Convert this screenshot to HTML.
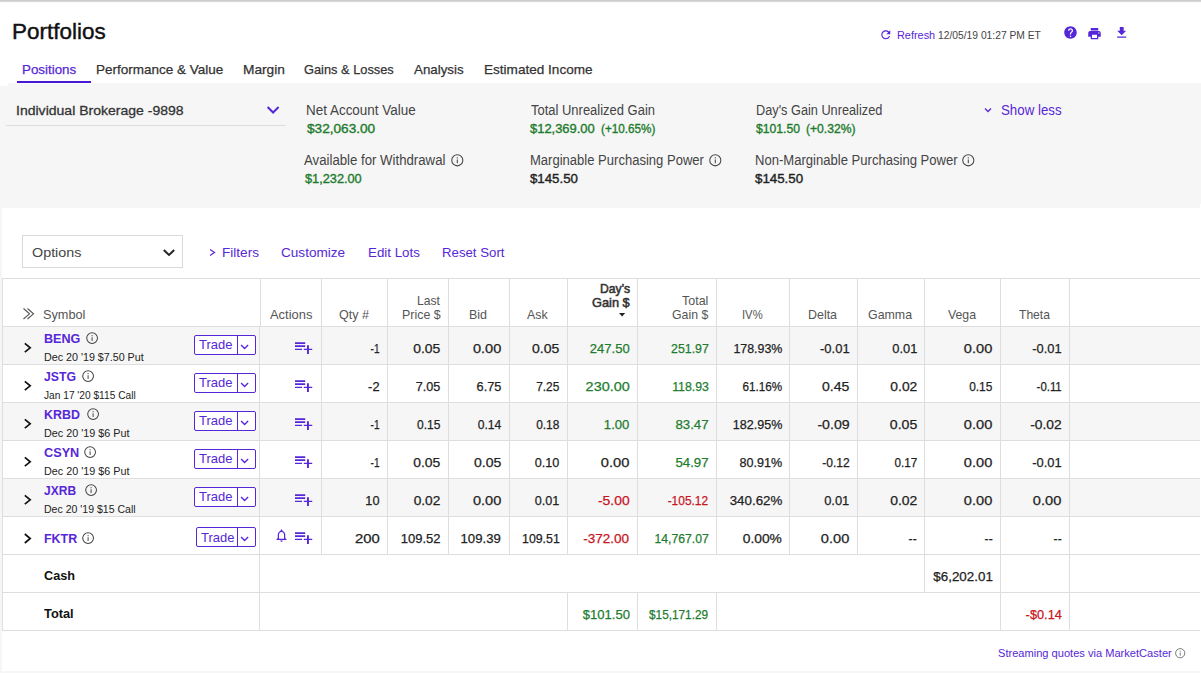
<!DOCTYPE html>
<html lang="en"><head><meta charset="utf-8"><title>Portfolios</title><style>
*{box-sizing:border-box;margin:0;padding:0}
html,body{width:1201px;height:673px;overflow:hidden;background:#f6f6f6;font-family:"Liberation Sans",sans-serif;color:#222}
.a{position:absolute}
.t{position:absolute;white-space:nowrap;line-height:1;transform-origin:0 0}
.tr{transform-origin:100% 0}
.ln{position:absolute;background:#dedede}
svg{position:absolute;overflow:visible}
</style></head><body>
<div class="bg">
<div class="a" style="left:0px;top:0px;width:1201px;height:1px;background:#cccccc;"></div>
<div class="a" style="left:0px;top:1px;width:1201px;height:1px;background:#d9d9d9;"></div>
<div class="a" style="left:0px;top:2px;width:1201px;height:1px;background:#fafafa;"></div>
<div class="a" style="left:0px;top:3px;width:1201px;height:80px;background:#fff;"></div>
<div class="a" style="left:0px;top:83px;width:8px;height:3px;background:#fff;"></div>
<div class="a" style="left:17px;top:83px;width:74px;height:1px;background:#fdfdfd;"></div>
<div class="a" style="left:2px;top:208px;width:1199px;height:463px;background:#fff;"></div>
<div class="a" style="left:1200px;top:204px;width:1px;height:469px;background:#fff;"></div>
</div>
<header>
<div class="t" style="top:22px;font-size:21.5px;color:#111;-webkit-text-stroke:0.4px #111;left:11.66px;transform:scaleX(1.0452);">Portfolios</div>
<div class="t" style="top:63px;font-size:13.5px;color:#5627d8;-webkit-text-stroke:0.25px #5627d8;left:21.66px;transform:scaleX(0.9889);">Positions</div>
<div class="t" style="top:63px;font-size:13.5px;color:#333;-webkit-text-stroke:0.25px #333;left:95.91px;">Performance &amp; Value</div>
<div class="t" style="top:63px;font-size:13.5px;color:#333;-webkit-text-stroke:0.25px #333;left:242.66px;transform:scaleX(1.0160);">Margin</div>
<div class="t" style="top:63px;font-size:13.5px;color:#333;-webkit-text-stroke:0.25px #333;left:304.46px;transform:scaleX(0.9495);">Gains &amp; Losses</div>
<div class="t" style="top:63px;font-size:13.5px;color:#333;-webkit-text-stroke:0.25px #333;left:413.96px;transform:scaleX(0.9879);">Analysis</div>
<div class="t" style="top:63px;font-size:13.5px;color:#333;-webkit-text-stroke:0.25px #333;left:483.66px;transform:scaleX(1.0049);">Estimated Income</div>
<div class="a" style="left:17px;top:81px;width:74px;height:2px;background:#4a18d3;"></div>
<div class="tools">
<svg style="left:878.75px;top:27.75px" width="13.50" height="13.50" viewBox="0 0 24 24"><path fill="#5627d8" d="M17.65 6.35C16.2 4.9 14.21 4 12 4c-4.42 0-7.99 3.58-7.99 8s3.57 8 7.99 8c3.73 0 6.84-2.55 7.73-6h-2.08c-.82 2.33-3.04 4-5.65 4-3.31 0-6-2.69-6-6s2.69-6 6-6c1.66 0 3.14.69 4.22 1.78L13 11h7V4l-2.35 2.35z"/></svg>
<div class="t" style="top:30px;font-size:11.5px;color:#5627d8;left:897.11px;transform:scaleX(0.9477);">Refresh</div>
<div class="t" style="top:30px;font-size:11.5px;color:#444;left:938.31px;transform:scaleX(0.8940);">12/05/19 01:27 PM ET</div>
<svg style="left:1062.75px;top:25.00px" width="15.00" height="15.00" viewBox="0 0 24 24"><path fill="#5627d8" d="M12 2C6.48 2 2 6.48 2 12s4.48 10 10 10 10-4.48 10-10S17.52 2 12 2zm1 17h-2v-2h2v2zm2.07-7.75l-.9.92C13.45 12.9 13 13.5 13 15h-2v-.5c0-1.1.45-2.1 1.17-2.830l1.24-1.26c.37-.36.59-.86.59-1.41 0-1.1-.9-2-2-2s-2 .9-2 2H8c0-2.21 1.79-4 4-4s4 1.79 4 4c0 .88-.36 1.68-.93 2.25z"/></svg>
<svg style="left:1086.85px;top:25.95px" width="15.00" height="15.00" viewBox="0 0 24 24"><path fill="#5627d8" d="M19 8H5c-1.66 0-3 1.34-3 3v6h4v4h12v-4h4v-6c0-1.660-1.34-3-3-3zm-3 11H8v-5h8v5zm3-7c-.55 0-1-.45-1-1s.45-1 1-1 1 .45 1 1-.45 1-1 1zm-1-9H6v4h12V3z"/></svg>
<svg style="left:1113.79px;top:25.11px" width="15.43" height="15.43" viewBox="0 0 24 24"><path fill="#5627d8" d="M19 9h-4V3H9v6H5l7 7 7-7zM5 18v2h14v-2H5z"/></svg>
</div>
</header>
<section class="summary">
<div class="t" style="top:104px;font-size:13.5px;color:#333;-webkit-text-stroke:0.3px #333;left:15.66px;transform:scaleX(1.0391);">Individual Brokerage -9898</div>
<svg style="left:0;top:0" width="1201" height="673"><polyline points="267.60,107.00 273.10,112.50 278.60,107.00" fill="none" stroke="#5627d8" stroke-width="2"/></svg>
<div class="ln" style="left:6px;top:125px;width:280px;height:1px"></div>
<div class="t" style="top:103px;font-size:14px;color:#444;left:305.95px;transform:scaleX(0.9610);">Net Account Value</div>
<div class="t" style="top:123px;font-size:12px;color:#1d7c2d;-webkit-text-stroke:0.35px #1d7c2d;left:306.50px;transform:scaleX(1.1355);">$32,063.00</div>
<div class="t" style="top:103px;font-size:14px;color:#444;left:530.65px;transform:scaleX(0.9263);">Total Unrealized Gain</div>
<div class="t" style="top:123px;font-size:12px;color:#1d7c2d;-webkit-text-stroke:0.35px #1d7c2d;left:530.30px;transform:scaleX(1.0772);">$12,369.00</div>
<div class="t" style="top:123px;font-size:12px;color:#1d7c2d;-webkit-text-stroke:0.35px #1d7c2d;left:601.20px;transform:scaleX(0.9748);">(+10.65%)</div>
<div class="t" style="top:103px;font-size:14px;color:#444;left:755.65px;transform:scaleX(0.9096);">Day's Gain Unrealized</div>
<div class="t" style="top:123px;font-size:12px;color:#1d7c2d;-webkit-text-stroke:0.35px #1d7c2d;left:755.70px;transform:scaleX(1.0140);">$101.50</div>
<div class="t" style="top:123px;font-size:12px;color:#1d7c2d;-webkit-text-stroke:0.35px #1d7c2d;left:805.70px;transform:scaleX(1.0096);">(+0.32%)</div>
<svg style="left:0;top:0" width="1201" height="673"><polyline points="985.00,108.50 988.00,111.50 991.00,108.50" fill="none" stroke="#5627d8" stroke-width="1.3"/></svg>
<div class="t" style="top:103px;font-size:14px;color:#5627d8;left:1000.75px;transform:scaleX(0.9497);">Show less</div>
<div class="t" style="top:153px;font-size:14px;color:#444;left:304.45px;transform:scaleX(0.9432);">Available for Withdrawal</div>
<svg style="left:450.70px;top:154.20px" width="12.60" height="12.60" viewBox="0 0 12 12"><circle cx="6" cy="6" r="5.3" fill="none" stroke="#444" stroke-width="1"/><rect x="5.5" y="5.2" width="1" height="3.6" fill="#444"/><rect x="5.5" y="3.1" width="1" height="1.1" fill="#444"/></svg>
<div class="t" style="top:173px;font-size:12px;color:#1d7c2d;-webkit-text-stroke:0.35px #1d7c2d;left:304.50px;transform:scaleX(1.0620);">$1,232.00</div>
<div class="t" style="top:153px;font-size:14px;color:#444;left:529.65px;transform:scaleX(0.9311);">Marginable Purchasing Power</div>
<svg style="left:708.50px;top:154.20px" width="12.60" height="12.60" viewBox="0 0 12 12"><circle cx="6" cy="6" r="5.3" fill="none" stroke="#444" stroke-width="1"/><rect x="5.5" y="5.2" width="1" height="3.6" fill="#444"/><rect x="5.5" y="3.1" width="1" height="1.1" fill="#444"/></svg>
<div class="t" style="top:173px;font-size:12px;color:#222;-webkit-text-stroke:0.35px #222;left:529.70px;transform:scaleX(1.1039);">$145.50</div>
<div class="t" style="top:153px;font-size:14px;color:#444;left:754.85px;transform:scaleX(0.9332);">Non-Marginable Purchasing Power</div>
<svg style="left:962.40px;top:154.20px" width="12.60" height="12.60" viewBox="0 0 12 12"><circle cx="6" cy="6" r="5.3" fill="none" stroke="#444" stroke-width="1"/><rect x="5.5" y="5.2" width="1" height="3.6" fill="#444"/><rect x="5.5" y="3.1" width="1" height="1.1" fill="#444"/></svg>
<div class="t" style="top:173px;font-size:12px;color:#222;-webkit-text-stroke:0.35px #222;left:754.90px;transform:scaleX(1.1085);">$145.50</div>
</section>
<section class="toolbar">
<div class="a" style="left:22px;top:235px;width:161px;height:33px;background:#fff;border:1px solid #d9d9d9"></div>
<div class="t" style="top:246px;font-size:13.5px;color:#444;left:32.16px;transform:scaleX(1.0622);">Options</div>
<svg style="left:0;top:0" width="1201" height="673"><polyline points="163.80,250.00 169.00,255.00 174.20,250.00" fill="none" stroke="#222" stroke-width="1.9"/></svg>
<svg style="left:0;top:0" width="1201" height="673"><polyline points="210.00,249.40 214.60,252.40 210.00,255.40" fill="none" stroke="#5627d8" stroke-width="1.2"/></svg>
<div class="t" style="top:246px;font-size:13.5px;color:#5627d8;left:222.16px;transform:scaleX(1.0048);">Filters</div>
<div class="t" style="top:246px;font-size:13.5px;color:#5627d8;left:281.06px;transform:scaleX(1.0062);">Customize</div>
<div class="t" style="top:246px;font-size:13.5px;color:#5627d8;left:367.96px;transform:scaleX(0.9875);">Edit Lots</div>
<div class="t" style="top:246px;font-size:13.5px;color:#5627d8;left:442.06px;transform:scaleX(0.9795);">Reset Sort</div>
</section>
<section class="positions">
<div class="grid">
<div class="a" style="left:2px;top:327px;width:1198px;height:37px;background:#f6f6f6;"></div>
<div class="a" style="left:2px;top:403px;width:1198px;height:37px;background:#f6f6f6;"></div>
<div class="a" style="left:2px;top:479px;width:1198px;height:37px;background:#f6f6f6;"></div>
<div class="ln" style="left:2px;top:278px;width:1198px;height:1px"></div>
<div class="ln" style="left:2px;top:326px;width:1198px;height:1px"></div>
<div class="ln" style="left:2px;top:364px;width:1198px;height:1px"></div>
<div class="ln" style="left:2px;top:402px;width:1198px;height:1px"></div>
<div class="ln" style="left:2px;top:440px;width:1198px;height:1px"></div>
<div class="ln" style="left:2px;top:478px;width:1198px;height:1px"></div>
<div class="ln" style="left:2px;top:516px;width:1198px;height:1px"></div>
<div class="ln" style="left:2px;top:554px;width:1198px;height:1px"></div>
<div class="ln" style="left:2px;top:592px;width:1198px;height:1px"></div>
<div class="ln" style="left:2px;top:630px;width:1198px;height:1px"></div>
<div class="ln" style="left:2px;top:278px;width:1px;height:353px"></div>
<div class="ln" style="left:260px;top:278px;width:1px;height:48px"></div>
<div class="ln" style="left:259px;top:326px;width:1px;height:229px"></div>
<div class="ln" style="left:321px;top:278px;width:1px;height:277px"></div>
<div class="ln" style="left:387px;top:278px;width:1px;height:277px"></div>
<div class="ln" style="left:448px;top:278px;width:1px;height:277px"></div>
<div class="ln" style="left:509px;top:278px;width:1px;height:277px"></div>
<div class="ln" style="left:567px;top:278px;width:1px;height:277px"></div>
<div class="ln" style="left:637px;top:278px;width:1px;height:277px"></div>
<div class="ln" style="left:716px;top:278px;width:1px;height:277px"></div>
<div class="ln" style="left:789px;top:278px;width:1px;height:277px"></div>
<div class="ln" style="left:857px;top:278px;width:1px;height:277px"></div>
<div class="ln" style="left:924px;top:278px;width:1px;height:277px"></div>
<div class="ln" style="left:1000px;top:278px;width:1px;height:277px"></div>
<div class="ln" style="left:1069px;top:278px;width:1px;height:277px"></div>
<div class="ln" style="left:259px;top:554px;width:1px;height:38px"></div>
<div class="ln" style="left:924px;top:554px;width:1px;height:38px"></div>
<div class="ln" style="left:1000px;top:554px;width:1px;height:38px"></div>
<div class="ln" style="left:1069px;top:554px;width:1px;height:38px"></div>
<div class="ln" style="left:259px;top:592px;width:1px;height:38px"></div>
<div class="ln" style="left:567px;top:592px;width:1px;height:38px"></div>
<div class="ln" style="left:637px;top:592px;width:1px;height:38px"></div>
<div class="ln" style="left:716px;top:592px;width:1px;height:38px"></div>
<div class="ln" style="left:1000px;top:592px;width:1px;height:38px"></div>
<div class="ln" style="left:1069px;top:592px;width:1px;height:38px"></div>
</div>
<div class="thead">
<svg style="left:0;top:0" width="1201" height="673"><polyline points="23.50,308.50 29.50,313.80 23.50,319.00" fill="none" stroke="#555" stroke-width="1.1"/></svg>
<svg style="left:0;top:0" width="1201" height="673"><polyline points="27.50,308.50 33.50,313.80 27.50,319.00" fill="none" stroke="#555" stroke-width="1.1"/></svg>
<div class="t" style="top:309px;font-size:12.8px;color:#555;left:43.48px;transform:scaleX(0.9922);">Symbol</div>
<div class="t" style="top:309px;font-size:12.8px;color:#555;left:269.68px;transform:scaleX(1.0088);">Actions</div>
<div class="t" style="top:309px;font-size:12.8px;color:#555;left:338.68px;transform:scaleX(0.9786);">Qty #</div>
<div class="t" style="top:295px;font-size:12.8px;color:#555;left:417.38px;transform:scaleX(0.9478);">Last</div>
<div class="t" style="top:309px;font-size:12.8px;color:#555;left:401.68px;transform:scaleX(0.9702);">Price $</div>
<div class="t" style="top:309px;font-size:12.8px;color:#555;left:468.98px;transform:scaleX(0.9751);">Bid</div>
<div class="t" style="top:309px;font-size:12.8px;color:#555;left:527.38px;transform:scaleX(0.9670);">Ask</div>
<div class="t" style="top:283px;font-size:12.8px;color:#333;-webkit-text-stroke:0.55px #333;left:599.58px;transform:scaleX(0.9504);">Day's</div>
<div class="t" style="top:297px;font-size:12.8px;color:#333;-webkit-text-stroke:0.55px #333;left:591.98px;">Gain $</div>
<svg style="left:0;top:0" width="1201" height="673"><polygon points="619,313 625.2,313 622.1,316.4" fill="#222"/></svg>
<div class="t" style="top:295px;font-size:12.8px;color:#555;left:682.18px;transform:scaleX(0.9744);">Total</div>
<div class="t" style="top:309px;font-size:12.8px;color:#555;left:672.28px;transform:scaleX(0.9608);">Gain $</div>
<div class="t" style="top:309px;font-size:12.8px;color:#555;left:741.98px;transform:scaleX(0.8789);">IV%</div>
<div class="t" style="top:309px;font-size:12.8px;color:#555;left:807.98px;transform:scaleX(0.9721);">Delta</div>
<div class="t" style="top:309px;font-size:12.8px;color:#555;left:867.98px;transform:scaleX(0.9676);">Gamma</div>
<div class="t" style="top:309px;font-size:12.8px;color:#555;left:947.98px;transform:scaleX(0.9607);">Vega</div>
<div class="t" style="top:309px;font-size:12.8px;color:#555;left:1018.68px;transform:scaleX(0.9452);">Theta</div>
</div>
<div class="row">
<svg style="left:0;top:0" width="1201" height="673"><polyline points="24.80,343.40 30.20,347.80 24.80,352.20" fill="none" stroke="#111" stroke-width="1.7"/></svg>
<div class="t" style="top:332px;font-size:13.5px;color:#5627d8;font-weight:bold;left:43.76px;transform:scaleX(0.9323);">BENG</div>
<div class="t" style="top:352px;font-size:11.5px;color:#222;left:43.81px;transform:scaleX(0.9310);">Dec 20 '19 $7.50 Put</div>
<svg style="left:85.50px;top:332.20px" width="12.20" height="12.20" viewBox="0 0 12 12"><circle cx="6" cy="6" r="5.3" fill="none" stroke="#444" stroke-width="1"/><rect x="5.5" y="5.2" width="1" height="3.6" fill="#444"/><rect x="5.5" y="3.1" width="1" height="1.1" fill="#444"/></svg>
<div class="a" style="left:194px;top:335px;width:62px;height:20px;background:#fff;border:1px solid #5627d8;border-radius:2px"></div>
<div class="a" style="left:237px;top:336px;width:1px;height:18px;background:#5627d8;"></div>
<div class="t" style="top:338px;font-size:13.5px;color:#5627d8;left:199.16px;transform:scaleX(0.9629);">Trade</div>
<svg style="left:0;top:0" width="1201" height="673"><polyline points="241.10,345.00 244.60,348.50 248.10,345.00" fill="none" stroke="#5627d8" stroke-width="1.35"/></svg>
<svg style="left:295px;top:342px" width="18" height="13" viewBox="0 0 18 13"><path fill="#5627d8" d="M0 0.200h10.2v1.700H0zM0 3.200h10.200v1.700H0zM0 6.800h7v1.100H0zM8.800 6.800h8.400v1.100H8.800zM12 3.200h1.900v8.700H12z"/></svg>
<div class="t tr" style="top:342px;font-size:13px;color:#222;-webkit-text-stroke:0.25px #222;right:821.38px;transform:scaleX(0.7741);">-1</div>
<div class="t tr" style="top:342px;font-size:13px;color:#222;-webkit-text-stroke:0.25px #222;right:760.48px;transform:scaleX(1.0686);">0.05</div>
<div class="t tr" style="top:342px;font-size:13px;color:#222;-webkit-text-stroke:0.25px #222;right:699.88px;transform:scaleX(1.1200);">0.00</div>
<div class="t tr" style="top:342px;font-size:13px;color:#222;-webkit-text-stroke:0.25px #222;right:641.67px;transform:scaleX(1.0765);">0.05</div>
<div class="t tr" style="top:342px;font-size:13px;color:#1d7c2d;-webkit-text-stroke:0.25px #1d7c2d;right:571.67px;transform:scaleX(1.0046);">247.50</div>
<div class="t tr" style="top:342px;font-size:13px;color:#1d7c2d;-webkit-text-stroke:0.25px #1d7c2d;right:492.47px;transform:scaleX(0.9481);">251.97</div>
<div class="t tr" style="top:342px;font-size:13px;color:#222;-webkit-text-stroke:0.25px #222;right:419.17px;transform:scaleX(0.9537);">178.93%</div>
<div class="t tr" style="top:342px;font-size:13px;color:#222;-webkit-text-stroke:0.25px #222;right:351.38px;">-0.01</div>
<div class="t tr" style="top:342px;font-size:13px;color:#222;-webkit-text-stroke:0.25px #222;right:284.17px;transform:scaleX(0.9896);">0.01</div>
<div class="t tr" style="top:342px;font-size:13px;color:#222;-webkit-text-stroke:0.25px #222;right:208.47px;transform:scaleX(1.1240);">0.00</div>
<div class="t tr" style="top:342px;font-size:13px;color:#222;-webkit-text-stroke:0.25px #222;right:139.47px;transform:scaleX(0.9902);">-0.01</div>
</div>
<div class="row">
<svg style="left:0;top:0" width="1201" height="673"><polyline points="24.80,381.40 30.20,385.80 24.80,390.20" fill="none" stroke="#111" stroke-width="1.7"/></svg>
<div class="t" style="top:370px;font-size:13.5px;color:#5627d8;font-weight:bold;left:43.76px;transform:scaleX(0.9095);">JSTG</div>
<div class="t" style="top:390px;font-size:11.5px;color:#222;left:43.81px;transform:scaleX(0.8845);">Jan 17 '20 $115 Call</div>
<svg style="left:82.20px;top:370.20px" width="12.20" height="12.20" viewBox="0 0 12 12"><circle cx="6" cy="6" r="5.3" fill="none" stroke="#444" stroke-width="1"/><rect x="5.5" y="5.2" width="1" height="3.6" fill="#444"/><rect x="5.5" y="3.1" width="1" height="1.1" fill="#444"/></svg>
<div class="a" style="left:194px;top:373px;width:62px;height:20px;background:#fff;border:1px solid #5627d8;border-radius:2px"></div>
<div class="a" style="left:237px;top:374px;width:1px;height:18px;background:#5627d8;"></div>
<div class="t" style="top:376px;font-size:13.5px;color:#5627d8;left:199.16px;transform:scaleX(0.9629);">Trade</div>
<svg style="left:0;top:0" width="1201" height="673"><polyline points="241.10,383.00 244.60,386.50 248.10,383.00" fill="none" stroke="#5627d8" stroke-width="1.35"/></svg>
<svg style="left:295px;top:380px" width="18" height="13" viewBox="0 0 18 13"><path fill="#5627d8" d="M0 0.200h10.2v1.700H0zM0 3.200h10.200v1.700H0zM0 6.800h7v1.100H0zM8.800 6.800h8.400v1.100H8.800zM12 3.200h1.900v8.700H12z"/></svg>
<div class="t tr" style="top:380px;font-size:13px;color:#222;-webkit-text-stroke:0.25px #222;right:821.38px;transform:scaleX(0.9903);">-2</div>
<div class="t tr" style="top:380px;font-size:13px;color:#222;-webkit-text-stroke:0.25px #222;right:760.48px;transform:scaleX(0.9699);">7.05</div>
<div class="t tr" style="top:380px;font-size:13px;color:#222;-webkit-text-stroke:0.25px #222;right:699.88px;transform:scaleX(0.9778);">6.75</div>
<div class="t tr" style="top:380px;font-size:13px;color:#222;-webkit-text-stroke:0.25px #222;right:641.67px;transform:scaleX(0.9146);">7.25</div>
<div class="t tr" style="top:380px;font-size:13px;color:#1d7c2d;-webkit-text-stroke:0.25px #1d7c2d;right:571.67px;transform:scaleX(1.1103);">230.00</div>
<div class="t tr" style="top:380px;font-size:13px;color:#1d7c2d;-webkit-text-stroke:0.25px #1d7c2d;right:492.47px;transform:scaleX(0.9447);">118.93</div>
<div class="t tr" style="top:380px;font-size:13px;color:#222;-webkit-text-stroke:0.25px #222;right:419.17px;transform:scaleX(0.8970);">61.16%</div>
<div class="t tr" style="top:380px;font-size:13px;color:#222;-webkit-text-stroke:0.25px #222;right:351.38px;transform:scaleX(1.0765);">0.45</div>
<div class="t tr" style="top:380px;font-size:13px;color:#222;-webkit-text-stroke:0.25px #222;right:284.17px;transform:scaleX(1.0647);">0.02</div>
<div class="t tr" style="top:380px;font-size:13px;color:#222;-webkit-text-stroke:0.25px #222;right:208.47px;transform:scaleX(0.9146);">0.15</div>
<div class="t tr" style="top:380px;font-size:13px;color:#222;-webkit-text-stroke:0.25px #222;right:139.47px;transform:scaleX(0.8737);">-0.11</div>
</div>
<div class="row">
<svg style="left:0;top:0" width="1201" height="673"><polyline points="24.80,419.40 30.20,423.80 24.80,428.20" fill="none" stroke="#111" stroke-width="1.7"/></svg>
<div class="t" style="top:408px;font-size:13.5px;color:#5627d8;font-weight:bold;left:43.76px;transform:scaleX(0.9199);">KRBD</div>
<div class="t" style="top:428px;font-size:11.5px;color:#222;left:43.81px;transform:scaleX(0.9397);">Dec 20 '19 $6 Put</div>
<svg style="left:86.50px;top:408.20px" width="12.20" height="12.20" viewBox="0 0 12 12"><circle cx="6" cy="6" r="5.3" fill="none" stroke="#444" stroke-width="1"/><rect x="5.5" y="5.2" width="1" height="3.6" fill="#444"/><rect x="5.5" y="3.1" width="1" height="1.1" fill="#444"/></svg>
<div class="a" style="left:194px;top:411px;width:62px;height:20px;background:#fff;border:1px solid #5627d8;border-radius:2px"></div>
<div class="a" style="left:237px;top:412px;width:1px;height:18px;background:#5627d8;"></div>
<div class="t" style="top:414px;font-size:13.5px;color:#5627d8;left:199.16px;transform:scaleX(0.9629);">Trade</div>
<svg style="left:0;top:0" width="1201" height="673"><polyline points="241.10,421.00 244.60,424.50 248.10,421.00" fill="none" stroke="#5627d8" stroke-width="1.35"/></svg>
<svg style="left:295px;top:418px" width="18" height="13" viewBox="0 0 18 13"><path fill="#5627d8" d="M0 0.200h10.2v1.700H0zM0 3.200h10.200v1.700H0zM0 6.800h7v1.100H0zM8.800 6.800h8.400v1.100H8.800zM12 3.200h1.900v8.700H12z"/></svg>
<div class="t tr" style="top:418px;font-size:13px;color:#222;-webkit-text-stroke:0.25px #222;right:821.38px;transform:scaleX(0.7741);">-1</div>
<div class="t tr" style="top:418px;font-size:13px;color:#222;-webkit-text-stroke:0.25px #222;right:760.48px;transform:scaleX(0.9225);">0.15</div>
<div class="t tr" style="top:418px;font-size:13px;color:#222;-webkit-text-stroke:0.25px #222;right:699.88px;transform:scaleX(0.9304);">0.14</div>
<div class="t tr" style="top:418px;font-size:13px;color:#222;-webkit-text-stroke:0.25px #222;right:641.67px;transform:scaleX(0.9146);">0.18</div>
<div class="t tr" style="top:418px;font-size:13px;color:#1d7c2d;-webkit-text-stroke:0.25px #1d7c2d;right:571.67px;transform:scaleX(1.0054);">1.00</div>
<div class="t tr" style="top:418px;font-size:13px;color:#1d7c2d;-webkit-text-stroke:0.25px #1d7c2d;right:492.47px;transform:scaleX(1.0185);">83.47</div>
<div class="t tr" style="top:418px;font-size:13px;color:#222;-webkit-text-stroke:0.25px #222;right:419.17px;transform:scaleX(0.9654);">182.95%</div>
<div class="t tr" style="top:418px;font-size:13px;color:#222;-webkit-text-stroke:0.25px #222;right:351.38px;transform:scaleX(1.0880);">-0.09</div>
<div class="t tr" style="top:418px;font-size:13px;color:#222;-webkit-text-stroke:0.25px #222;right:284.17px;transform:scaleX(1.0844);">0.05</div>
<div class="t tr" style="top:418px;font-size:13px;color:#222;-webkit-text-stroke:0.25px #222;right:208.47px;transform:scaleX(1.1240);">0.00</div>
<div class="t tr" style="top:418px;font-size:13px;color:#222;-webkit-text-stroke:0.25px #222;right:139.47px;transform:scaleX(1.0610);">-0.02</div>
</div>
<div class="row">
<svg style="left:0;top:0" width="1201" height="673"><polyline points="24.80,457.40 30.20,461.80 24.80,466.20" fill="none" stroke="#111" stroke-width="1.7"/></svg>
<div class="t" style="top:446px;font-size:13.5px;color:#5627d8;font-weight:bold;left:43.76px;transform:scaleX(0.9403);">CSYN</div>
<div class="t" style="top:466px;font-size:11.5px;color:#222;left:43.81px;transform:scaleX(0.9397);">Dec 20 '19 $6 Put</div>
<svg style="left:84.20px;top:446.20px" width="12.20" height="12.20" viewBox="0 0 12 12"><circle cx="6" cy="6" r="5.3" fill="none" stroke="#444" stroke-width="1"/><rect x="5.5" y="5.2" width="1" height="3.6" fill="#444"/><rect x="5.5" y="3.1" width="1" height="1.1" fill="#444"/></svg>
<div class="a" style="left:194px;top:449px;width:62px;height:20px;background:#fff;border:1px solid #5627d8;border-radius:2px"></div>
<div class="a" style="left:237px;top:450px;width:1px;height:18px;background:#5627d8;"></div>
<div class="t" style="top:452px;font-size:13.5px;color:#5627d8;left:199.16px;transform:scaleX(0.9629);">Trade</div>
<svg style="left:0;top:0" width="1201" height="673"><polyline points="241.10,459.00 244.60,462.50 248.10,459.00" fill="none" stroke="#5627d8" stroke-width="1.35"/></svg>
<svg style="left:295px;top:456px" width="18" height="13" viewBox="0 0 18 13"><path fill="#5627d8" d="M0 0.200h10.2v1.700H0zM0 3.200h10.200v1.700H0zM0 6.800h7v1.100H0zM8.800 6.800h8.400v1.100H8.800zM12 3.200h1.900v8.700H12z"/></svg>
<div class="t tr" style="top:456px;font-size:13px;color:#222;-webkit-text-stroke:0.25px #222;right:821.38px;transform:scaleX(0.7741);">-1</div>
<div class="t tr" style="top:456px;font-size:13px;color:#222;-webkit-text-stroke:0.25px #222;right:760.48px;transform:scaleX(1.0686);">0.05</div>
<div class="t tr" style="top:456px;font-size:13px;color:#222;-webkit-text-stroke:0.25px #222;right:699.88px;transform:scaleX(1.0765);">0.05</div>
<div class="t tr" style="top:456px;font-size:13px;color:#222;-webkit-text-stroke:0.25px #222;right:641.67px;transform:scaleX(0.9699);">0.10</div>
<div class="t tr" style="top:456px;font-size:13px;color:#222;-webkit-text-stroke:0.25px #222;right:571.67px;transform:scaleX(1.1279);">0.00</div>
<div class="t tr" style="top:456px;font-size:13px;color:#1d7c2d;-webkit-text-stroke:0.25px #1d7c2d;right:492.47px;transform:scaleX(1.0185);">54.97</div>
<div class="t tr" style="top:456px;font-size:13px;color:#222;-webkit-text-stroke:0.25px #222;right:419.17px;transform:scaleX(0.9673);">80.91%</div>
<div class="t tr" style="top:456px;font-size:13px;color:#222;-webkit-text-stroke:0.25px #222;right:351.38px;transform:scaleX(0.9261);">-0.12</div>
<div class="t tr" style="top:456px;font-size:13px;color:#222;-webkit-text-stroke:0.25px #222;right:284.17px;transform:scaleX(0.8988);">0.17</div>
<div class="t tr" style="top:456px;font-size:13px;color:#222;-webkit-text-stroke:0.25px #222;right:208.47px;transform:scaleX(1.1240);">0.00</div>
<div class="t tr" style="top:456px;font-size:13px;color:#222;-webkit-text-stroke:0.25px #222;right:139.47px;transform:scaleX(0.9902);">-0.01</div>
</div>
<div class="row">
<svg style="left:0;top:0" width="1201" height="673"><polyline points="24.80,495.40 30.20,499.80 24.80,504.20" fill="none" stroke="#111" stroke-width="1.7"/></svg>
<div class="t" style="top:484px;font-size:13.5px;color:#5627d8;font-weight:bold;left:43.76px;transform:scaleX(0.8906);">JXRB</div>
<div class="t" style="top:504px;font-size:11.5px;color:#222;left:43.81px;transform:scaleX(0.9166);">Dec 20 '19 $15 Call</div>
<svg style="left:85.20px;top:484.20px" width="12.20" height="12.20" viewBox="0 0 12 12"><circle cx="6" cy="6" r="5.3" fill="none" stroke="#444" stroke-width="1"/><rect x="5.5" y="5.2" width="1" height="3.6" fill="#444"/><rect x="5.5" y="3.1" width="1" height="1.1" fill="#444"/></svg>
<div class="a" style="left:194px;top:487px;width:62px;height:20px;background:#fff;border:1px solid #5627d8;border-radius:2px"></div>
<div class="a" style="left:237px;top:488px;width:1px;height:18px;background:#5627d8;"></div>
<div class="t" style="top:490px;font-size:13.5px;color:#5627d8;left:199.16px;transform:scaleX(0.9629);">Trade</div>
<svg style="left:0;top:0" width="1201" height="673"><polyline points="241.10,497.00 244.60,500.50 248.10,497.00" fill="none" stroke="#5627d8" stroke-width="1.35"/></svg>
<svg style="left:295px;top:494px" width="18" height="13" viewBox="0 0 18 13"><path fill="#5627d8" d="M0 0.200h10.2v1.700H0zM0 3.200h10.200v1.700H0zM0 6.800h7v1.100H0zM8.800 6.800h8.400v1.100H8.800zM12 3.200h1.900v8.700H12z"/></svg>
<div class="t tr" style="top:494px;font-size:13px;color:#222;-webkit-text-stroke:0.25px #222;right:821.38px;transform:scaleX(0.9780);">10</div>
<div class="t tr" style="top:494px;font-size:13px;color:#222;-webkit-text-stroke:0.25px #222;right:760.48px;transform:scaleX(1.0528);">0.02</div>
<div class="t tr" style="top:494px;font-size:13px;color:#222;-webkit-text-stroke:0.25px #222;right:699.88px;transform:scaleX(1.1200);">0.00</div>
<div class="t tr" style="top:494px;font-size:13px;color:#222;-webkit-text-stroke:0.25px #222;right:641.67px;transform:scaleX(0.9699);">0.01</div>
<div class="t tr" style="top:494px;font-size:13px;color:#c8141e;-webkit-text-stroke:0.25px #c8141e;right:571.67px;transform:scaleX(1.0678);">-5.00</div>
<div class="t tr" style="top:494px;font-size:13px;color:#c8141e;-webkit-text-stroke:0.25px #c8141e;right:492.47px;transform:scaleX(0.9174);">-105.12</div>
<div class="t tr" style="top:494px;font-size:13px;color:#222;-webkit-text-stroke:0.25px #222;right:419.17px;transform:scaleX(1.0258);">340.62%</div>
<div class="t tr" style="top:494px;font-size:13px;color:#222;-webkit-text-stroke:0.25px #222;right:351.38px;transform:scaleX(0.9936);">0.01</div>
<div class="t tr" style="top:494px;font-size:13px;color:#222;-webkit-text-stroke:0.25px #222;right:284.17px;transform:scaleX(1.0726);">0.02</div>
<div class="t tr" style="top:494px;font-size:13px;color:#222;-webkit-text-stroke:0.25px #222;right:208.47px;transform:scaleX(1.1240);">0.00</div>
<div class="t tr" style="top:494px;font-size:13px;color:#222;-webkit-text-stroke:0.25px #222;right:139.47px;transform:scaleX(1.1240);">0.00</div>
</div>
<div class="row">
<svg style="left:0;top:0" width="1201" height="673"><polyline points="24.80,534.00 30.20,538.50 24.80,543.00" fill="none" stroke="#111" stroke-width="1.7"/></svg>
<div class="t" style="top:532px;font-size:13.5px;color:#5627d8;font-weight:bold;left:43.76px;transform:scaleX(0.9215);">FKTR</div>
<svg style="left:82.20px;top:532.20px" width="12.20" height="12.20" viewBox="0 0 12 12"><circle cx="6" cy="6" r="5.3" fill="none" stroke="#444" stroke-width="1"/><rect x="5.5" y="5.2" width="1" height="3.6" fill="#444"/><rect x="5.5" y="3.1" width="1" height="1.1" fill="#444"/></svg>
<div class="a" style="left:196px;top:527px;width:60px;height:20px;background:#fff;border:1px solid #5627d8;border-radius:2px"></div>
<div class="a" style="left:237px;top:528px;width:1px;height:18px;background:#5627d8;"></div>
<div class="t" style="top:531px;font-size:13.5px;color:#5627d8;left:201.16px;transform:scaleX(0.9629);">Trade</div>
<svg style="left:0;top:0" width="1201" height="673"><polyline points="241.10,537.00 244.60,540.50 248.10,537.00" fill="none" stroke="#5627d8" stroke-width="1.35"/></svg>
<svg style="left:273.50px;top:528.24px" width="15.00" height="15.00" viewBox="0 0 24 24"><path fill="#5627d8" d="M12 22c1.1 0 2-.9 2-2h-4c0 1.1.9 2 2 2zm6-6v-5c0-3.07-1.63-5.64-4.5-6.32V4c0-.83-.67-1.5-1.5-1.5s-1.5.67-1.5 1.5v.68C7.64 5.36 6 7.920 6 11v5l-2 2v1h16v-1l-2-2zm-2 1H8v-6c0-2.48 1.51-4.5 4-4.5s4 2.020 4 4.5v6z"/></svg>
<svg style="left:295px;top:532px" width="18" height="13" viewBox="0 0 18 13"><path fill="#5627d8" d="M0 0.200h10.2v1.700H0zM0 3.200h10.200v1.700H0zM0 6.800h7v1.100H0zM8.800 6.800h8.400v1.100H8.800zM12 3.200h1.900v8.700H12z"/></svg>
<div class="t tr" style="top:532px;font-size:13px;color:#222;-webkit-text-stroke:0.25px #222;right:821.38px;transform:scaleX(1.1404);">200</div>
<div class="t tr" style="top:532px;font-size:13px;color:#222;-webkit-text-stroke:0.25px #222;right:760.48px;">109.52</div>
<div class="t tr" style="top:532px;font-size:13px;color:#222;-webkit-text-stroke:0.25px #222;right:699.88px;transform:scaleX(1.0122);">109.39</div>
<div class="t tr" style="top:532px;font-size:13px;color:#222;-webkit-text-stroke:0.25px #222;right:641.67px;transform:scaleX(0.9493);">109.51</div>
<div class="t tr" style="top:532px;font-size:13px;color:#c8141e;-webkit-text-stroke:0.25px #c8141e;right:571.67px;transform:scaleX(1.0398);">-372.00</div>
<div class="t tr" style="top:532px;font-size:13px;color:#1d7c2d;-webkit-text-stroke:0.25px #1d7c2d;right:492.47px;transform:scaleX(0.9396);">14,767.07</div>
<div class="t tr" style="top:532px;font-size:13px;color:#222;-webkit-text-stroke:0.25px #222;right:419.17px;transform:scaleX(1.0617);">0.00%</div>
<div class="t tr" style="top:532px;font-size:13px;color:#222;-webkit-text-stroke:0.25px #222;right:351.38px;transform:scaleX(1.1240);">0.00</div>
<div class="t tr" style="top:532px;font-size:13px;color:#222;-webkit-text-stroke:0.25px #222;right:284.17px;transform:scaleX(0.9283);">--</div>
<div class="t tr" style="top:532px;font-size:13px;color:#222;-webkit-text-stroke:0.25px #222;right:208.47px;transform:scaleX(0.9283);">--</div>
<div class="t tr" style="top:532px;font-size:13px;color:#222;-webkit-text-stroke:0.25px #222;right:139.47px;transform:scaleX(0.9283);">--</div>
</div>
<div class="row">
<div class="t" style="top:569px;font-size:13.5px;color:#111;font-weight:bold;left:43.56px;transform:scaleX(0.9382);">Cash</div>
<div class="t tr" style="top:570px;font-size:13px;color:#222;-webkit-text-stroke:0.25px #222;right:208.47px;transform:scaleX(1.0295);">$6,202.01</div>
</div>
<div class="row">
<div class="t" style="top:607px;font-size:13.5px;color:#111;font-weight:bold;left:43.86px;transform:scaleX(0.9496);">Total</div>
<div class="t tr" style="top:608px;font-size:13px;color:#1d7c2d;-webkit-text-stroke:0.25px #1d7c2d;right:571.38px;transform:scaleX(1.0053);">$101.50</div>
<div class="t tr" style="top:608px;font-size:13px;color:#1d7c2d;-webkit-text-stroke:0.25px #1d7c2d;right:492.47px;transform:scaleX(0.9074);">$15,171.29</div>
<div class="t tr" style="top:608px;font-size:13px;color:#c8141e;-webkit-text-stroke:0.25px #c8141e;right:139.47px;transform:scaleX(0.9831);">-$0.14</div>
</div>
</section>
<footer>
<div class="t" style="top:648px;font-size:11px;color:#5627d8;left:997.73px;transform:scaleX(1.0077);">Streaming quotes via MarketCaster</div>
<svg style="left:1175.40px;top:648.20px" width="10.40" height="10.40" viewBox="0 0 12 12"><circle cx="6" cy="6" r="5.3" fill="none" stroke="#666" stroke-width="1"/><rect x="5.5" y="5.2" width="1" height="3.6" fill="#666"/><rect x="5.5" y="3.1" width="1" height="1.1" fill="#666"/></svg>
</footer>
</body></html>
